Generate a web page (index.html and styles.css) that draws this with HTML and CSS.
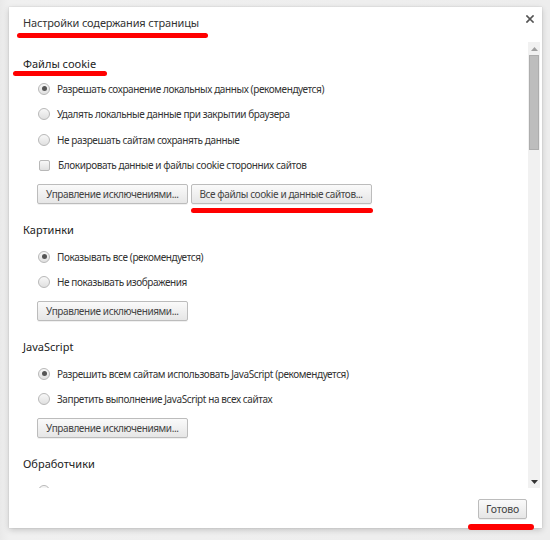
FILE: index.html
```html
<!DOCTYPE html>
<html lang="ru">
<head>
<meta charset="utf-8">
<title>Настройки содержания страницы</title>
<link rel="stylesheet" href="styles.css">
</head>
<body>
<div class="backdrop">
  <div class="dialog">
    <div class="header">
      <h1 class="title">Настройки содержания страницы</h1>
      <span class="mark mark-title"></span>
      <button class="close" aria-label="Закрыть">
        <svg width="8" height="8" viewBox="0 0 8 8"><path d="M1 1 L7 7 M7 1 L1 7" stroke="#555" stroke-width="1.7" stroke-linecap="square"/></svg>
      </button>
    </div>
    <div class="body">
      <div class="scroll">
        <section class="sec sec-first">
          <h2 class="sec-title">Файлы cookie<span class="mark mark-head"></span></h2>
          <label class="row"><span class="radio checked"></span>Разрешать сохранение локальных данных (рекомендуется)</label>
          <label class="row"><span class="radio"></span>Удалять локальные данные при закрытии браузера</label>
          <label class="row"><span class="radio"></span>Не разрешать сайтам сохранять данные</label>
          <label class="row"><span class="check"></span>Блокировать данные и файлы cookie сторонних сайтов</label>
          <div class="btns">
            <button class="btn">Управление исключениями...</button>
            <button class="btn btn-marked">Все файлы cookie и данные сайтов...<span class="mark mark-btn"></span></button>
          </div>
        </section>
        <section class="sec">
          <h2 class="sec-title">Картинки</h2>
          <label class="row"><span class="radio checked"></span>Показывать все (рекомендуется)</label>
          <label class="row"><span class="radio"></span>Не показывать изображения</label>
          <div class="btns">
            <button class="btn">Управление исключениями...</button>
          </div>
        </section>
        <section class="sec">
          <h2 class="sec-title">JavaScript</h2>
          <label class="row"><span class="radio checked"></span>Разрешить всем сайтам использовать JavaScript (рекомендуется)</label>
          <label class="row"><span class="radio"></span>Запретить выполнение JavaScript на всех сайтах</label>
          <div class="btns">
            <button class="btn">Управление исключениями...</button>
          </div>
        </section>
        <section class="sec">
          <h2 class="sec-title">Обработчики</h2>
          <div class="row row-cut"><span class="radio"></span></div>
        </section>
      </div>
      <div class="scrollbar">
        <div class="sb-arrow"><svg width="7" height="4" viewBox="0 0 7 4"><path d="M0 4 L3.5 0 L7 4 Z" fill="#a0a0a0"/></svg></div>
        <div class="sb-thumb"></div>
        <div class="sb-track"></div>
        <div class="sb-arrow"><svg width="7" height="4" viewBox="0 0 7 4"><path d="M0 0 L7 0 L3.5 4 Z" fill="#333"/></svg></div>
      </div>
    </div>
    <div class="footer">
      <button class="btn btn-done">Готово<span class="mark mark-done"></span></button>
    </div>
  </div>
</div>
</body>
</html>
```
FILE: styles.css
```css
* { box-sizing: border-box; }
html, body { margin: 0; padding: 0; }
body {
  width: 550px;
  height: 540px;
  overflow: hidden;
  background: #ececec;
  font-family: "Noto Sans", "Open Sans", sans-serif;
  color: #333;
}
.backdrop {
  width: 550px;
  height: 540px;
  padding: 7px 0 0 9px;
  background: linear-gradient(90deg, #e9e9e9 0, #f0f0f0 9px, #ededed 100%);
}
.dialog {
  position: relative;
  width: 533px;
  height: 521px;
  background: #fff;
  box-shadow: 0 2px 6px rgba(0,0,0,0.18), 0 0 1px rgba(0,0,0,0.2);
  display: flex;
  flex-direction: column;
}
.header {
  position: relative;
  height: 35px;
  padding: 7px 0 0 14px;
  flex: none;
}
.title {
  margin: 0;
  font-size: 11px;
  line-height: 18px;
  font-weight: normal;
  color: #333;
  letter-spacing: -0.15px;
}
.close {
  position: absolute;
  right: 5px;
  top: 5px;
  width: 14px;
  height: 14px;
  padding: 0;
  border: 0;
  background: none;
  display: flex;
  align-items: center;
  justify-content: center;
}
.mark {
  position: absolute;
  display: block;
  background: #ff0000;
  border-radius: 3px;
}
.mark-title { left: 8px; top: 26px; width: 191px; height: 5px; }
.body {
  flex: none;
  height: 446px;
  display: flex;
}
.scroll {
  flex: 1;
  overflow: hidden;
  padding: 12px 0 0 14px;
}
.sec { margin-bottom: 16px; }
.sec-title {
  position: relative;
  margin: 0 0 4px;
  font-size: 11px;
  line-height: 20px;
  font-weight: normal;
  color: #222;
}
.sec-first .sec-title { margin-bottom: 2px; }
.mark-head { left: -10px; top: 17px; width: 94px; height: 5px; }
.row {
  display: flex;
  align-items: center;
  height: 25.5px;
  padding-left: 15px;
  font-size: 10px;
  letter-spacing: -0.4px;
  color: #333;
}
.row-cut { margin-top: 2px; }
.radio {
  width: 12px;
  height: 12px;
  border-radius: 50%;
  border: 1px solid #b8b8b8;
  background: linear-gradient(#f8f8f8, #e0e0e0);
  margin-right: 7px;
  flex: none;
  display: flex;
  align-items: center;
  justify-content: center;
}
.radio.checked::after {
  content: "";
  width: 5px;
  height: 5px;
  border-radius: 50%;
  background: #555;
}
.check {
  width: 11px;
  height: 11px;
  border: 1px solid #b8b8b8;
  border-radius: 2px;
  background: linear-gradient(#f8f8f8, #e0e0e0);
  margin-right: 8px;
  margin-left: 1px;
  flex: none;
}
.btns {
  display: flex;
  gap: 3px;
  margin-top: 6px;
  padding-left: 14px;
}
.btn {
  position: relative;
  height: 20px;
  padding: 0 8px;
  border: 1px solid #bcbcbc;
  border-radius: 2px;
  background: linear-gradient(#fafafa, #e6e6e6);
  box-shadow: 0 1px 0 rgba(0,0,0,0.06);
  font-family: "Noto Sans", "Open Sans", sans-serif;
  font-size: 10px;
  letter-spacing: -0.4px;
  color: #444;
  line-height: 18px;
  white-space: nowrap;
}
.mark-btn { left: -1px; top: 23px; width: 182px; height: 5px; }
.scrollbar {
  flex: none;
  width: 12px;
  margin-right: 2px;
  display: flex;
  flex-direction: column;
  background: #f1f1f1;
}
.sb-arrow {
  height: 13px;
  display: flex;
  align-items: center;
  justify-content: center;
}
.sb-thumb {
  height: 95px;
  margin: 0 1px;
  background: #bdbdbd;
  border: 1px solid #adadad;
}
.sb-track { flex: 1; }
.footer {
  flex: none;
  display: flex;
  justify-content: flex-end;
  padding: 11px 15px 0 0;
}
.btn-done { width: 49px; padding: 0; font-size: 10.5px; letter-spacing: -0.2px; }
.mark-done { left: -11px; top: 24px; width: 66px; height: 6px; }
```
